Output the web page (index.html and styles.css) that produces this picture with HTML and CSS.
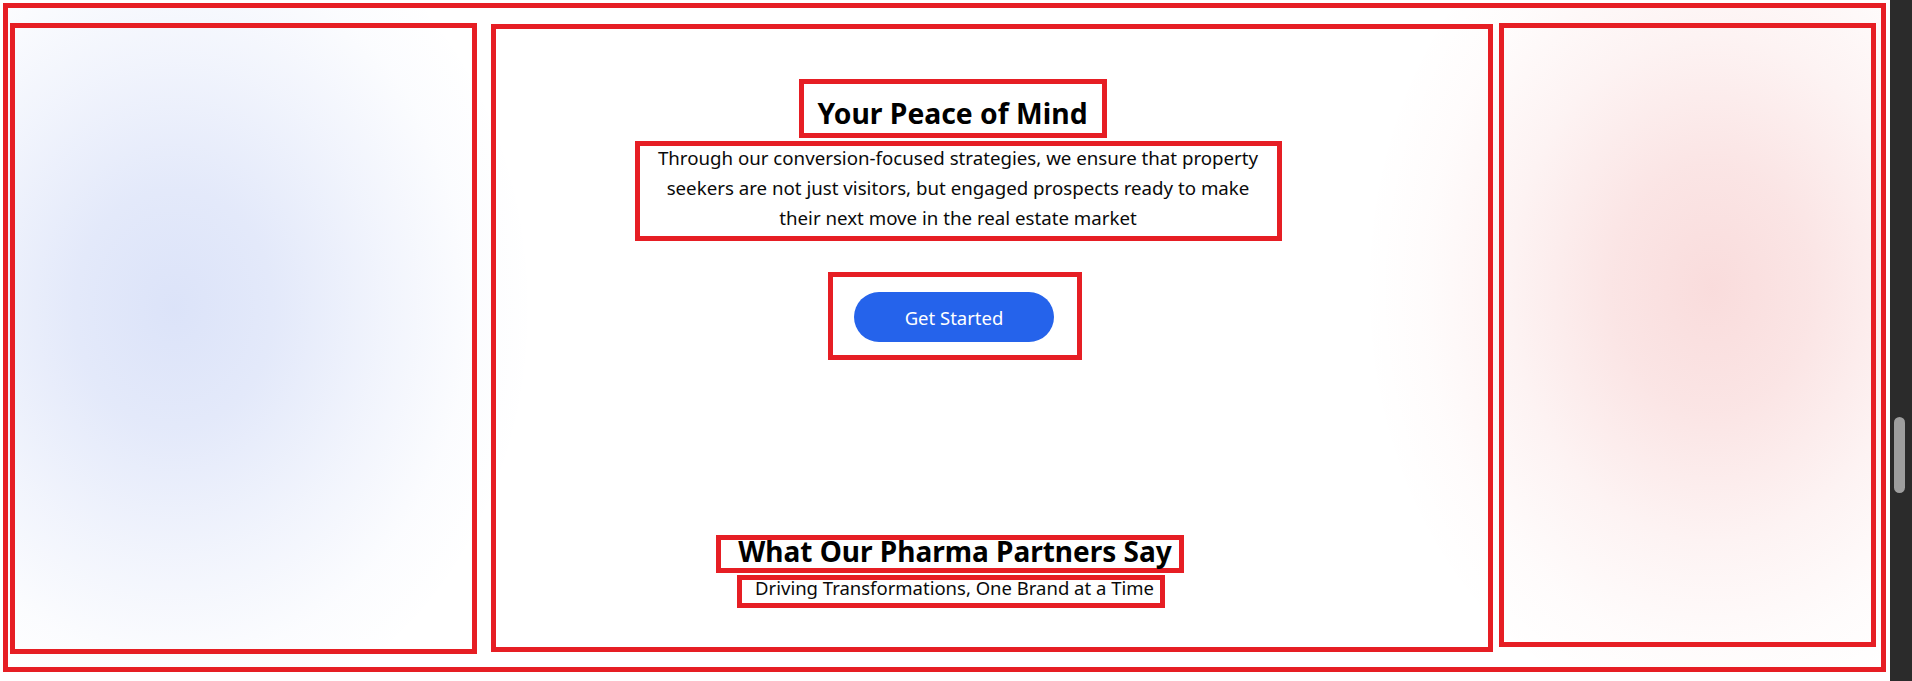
FILE: index.html
```html
<!DOCTYPE html>
<html lang="en">
<head>
<meta charset="utf-8">
<title>Your Peace of Mind</title>
<link rel="stylesheet" href="styles.css">
</head>
<body>
<div class="page">
  <section class="hero">
    <div class="deco">
      <div class="blob blob-left"></div>
      <div class="blob blob-mid"></div>
      <div class="blob blob-right"></div>
    </div>
    <div class="content">
      <h2 class="title">Your Peace of Mind</h2>
      <p class="lead"><span class="lead-text">Through our conversion-focused strategies, we ensure that property seekers are not just visitors, but engaged prospects ready to make their next move in the real estate market</span></p>
      <div class="cta-wrap"><a class="cta" href="#">Get Started</a></div>
      <h2 class="subtitle">What Our Pharma Partners Say</h2>
      <p class="tagline">Driving Transformations, One Brand at a Time</p>
    </div>
  </section>
</div>
<div class="scrollbar"><div class="thumb"></div></div>
</body>
</html>
```
FILE: styles.css
```css
html, body {
  margin: 0;
  padding: 0;
  height: 681px;
  overflow: hidden;
  background: #ffffff;
}
body {
  display: flex;
  font-family: "Noto Sans", "Open Sans", sans-serif;
  color: #0a0a0a;
}
.page {
  flex: 1;
  padding: 3px 4px 0 3px;
  min-width: 0;
}
.hero {
  box-sizing: border-box;
  height: 669px;
  border: 5px solid #e61e24;
  display: grid;
  background:
    radial-gradient(ellipse 360px 430px at 166px 300px,
      rgba(59, 100, 220, 0.18) 0%,
      rgba(59, 100, 220, 0.14) 28%,
      rgba(59, 100, 220, 0.07) 58%,
      rgba(59, 100, 220, 0.02) 82%,
      rgba(59, 100, 220, 0) 100%),
    radial-gradient(ellipse 350px 440px at 1704px 280px,
      rgba(220, 38, 38, 0.16) 0%,
      rgba(220, 38, 38, 0.12) 28%,
      rgba(220, 38, 38, 0.055) 58%,
      rgba(220, 38, 38, 0.015) 82%,
      rgba(220, 38, 38, 0) 100%),
    #ffffff;
}
.deco {
  grid-area: 1 / 1;
  display: flex;
  align-items: flex-start;
  padding-left: 2px;
}
.blob {
  box-sizing: border-box;
  border: 5px solid #e61e24;
  flex: none;
}
.blob-left {
  width: 467px;
  height: 631px;
  margin-top: 15px;
}
.blob-mid {
  width: 1002px;
  height: 628px;
  margin-top: 16px;
  margin-left: 14px;
}
.blob-right {
  width: 377px;
  height: 624px;
  margin-top: 15px;
  margin-left: 6px;
}
.content {
  grid-area: 1 / 1;
  display: flex;
  flex-direction: column;
  align-items: center;
  padding-top: 71px;
  padding-left: 17px;
  position: relative;
}
.title {
  margin: 0;
  box-sizing: border-box;
  border: 5px solid #e61e24;
  padding: 10px 14px 1px 13px;
  font-size: 28.3px;
  font-weight: 700;
  line-height: 38px;
  color: #000;
  white-space: nowrap;
}
.lead {
  margin: 3px 0 0 10px;
  box-sizing: border-box;
  width: 647px;
  border: 5px solid #e61e24;
  padding: 0 12px 3px;
  font-size: 18.7px;
  line-height: 30px;
  text-align: center;
  color: #0a0a0a;
}
.lead-text {
  display: block;
  margin-top: -3px;
}
.cta-wrap {
  margin: 31px 0 0 4px;
  border: 5px solid #e61e24;
  padding: 15px 23px 13px 21px;
  display: flex;
}
.cta {
  width: 200px;
  height: 50px;
  border-radius: 25px;
  background: #2563eb;
  color: #ffffff;
  font-size: 18.5px;
  text-decoration: none;
  display: flex;
  align-items: center;
  justify-content: center;
}
.subtitle {
  margin: 175px 6px 0 0;
  border: 5px solid #e61e24;
  padding: 0 7px 5px 17px;
  font-size: 28px;
  font-weight: 700;
  line-height: 23px;
  color: #000;
  white-space: nowrap;
}
.tagline {
  margin: 2px 4px 0 0;
  border: 5px solid #e61e24;
  padding: 0 6px 7px 13px;
  font-size: 18.5px;
  line-height: 16px;
  white-space: nowrap;
}
.scrollbar {
  width: 22px;
  flex: none;
  background: #2b2b2b;
  height: 681px;
  position: relative;
}
.thumb {
  position: absolute;
  left: 4px;
  top: 417px;
  width: 11px;
  height: 76px;
  border-radius: 6px;
  background: #9e9e9e;
}
```
